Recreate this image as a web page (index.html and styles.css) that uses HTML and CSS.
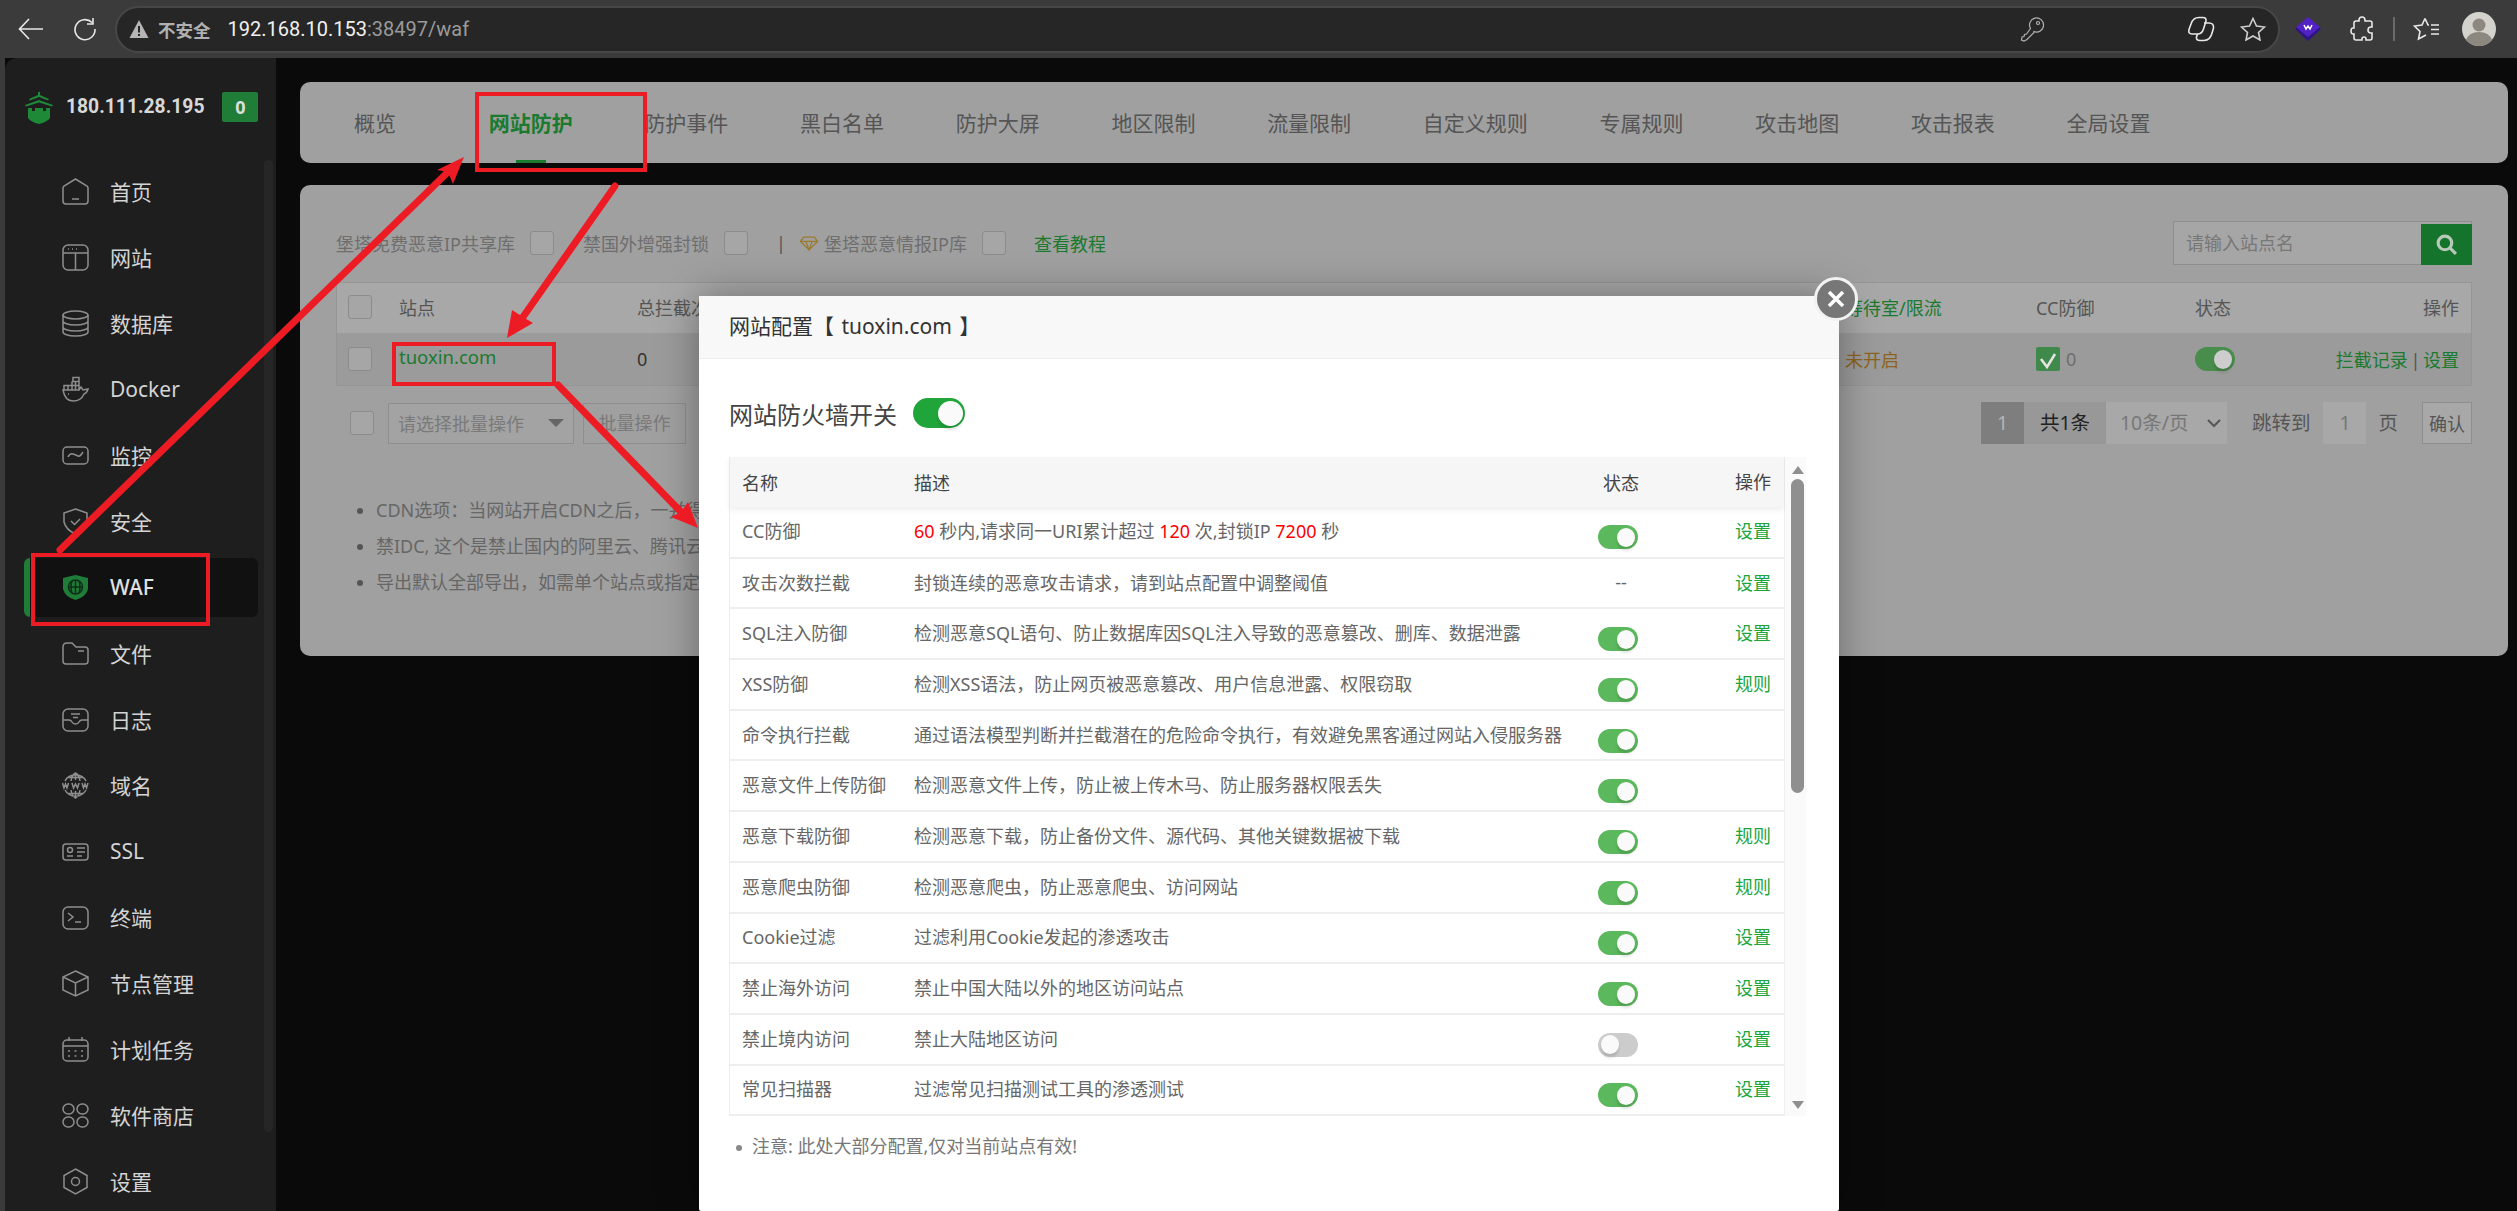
FILE: index.html
```html
<!DOCTYPE html>
<html lang="zh-CN">
<head>
    <meta charset="UTF-8">
    <title>WAF</title>
    <link rel="stylesheet" href="styles.css">
</head>
<body>
    <header class="browser">
        <svg class="b-icon back" viewBox="0 0 26 24"><path d="M25 12H2M11 2 1.500 12 11 22" /></svg>
        <svg class="b-icon reload" viewBox="0 0 24 24"><path d="M19 5.500A10 10 0 1 0 22 12M20 1v6h-6" /></svg>
        <div class="address">
            <svg class="warn" viewBox="0 0 20 20"><path d="M10 1 19.500 19H.5z" /><path class="warn-mark" d="M10 7v6.500M10 15v2" /></svg>
            <span class="insecure">不安全</span>
            <span class="url">192.168.10.153<em>:38497/waf</em></span>
            <svg class="b-icon key" viewBox="0 0 26 26"><path d="M15 16.500 8 23.500l-3 1.500-2.500-1 .5-3 2-.5.500-2 2-.5 4-5.500a7 7 0 1 1 3.500 3z" /><circle cx="19" cy="7" r="1.500" /></svg>
            <svg class="b-icon copilot" viewBox="0 0 28 26"><path d="M12 1.500h4q3.500 0 3 3.500l-2.500 8q-1.500 5-6 5H5q-4 0-3-4.500L4 8q2-6.500 8-6.500z" /><path d="M17 7h5q5 0 4.500 5l-1 3.500q-2 9-8.500 9h-4q-4 0-3.500-3.500l1-3" /></svg>
            <svg class="b-icon star" viewBox="0 0 26 24"><path d="m13 1.500 3.500 7.500 8 1-6 5.500 1.500 7.500-7-4-7 4 1.500-7.500-6-5.500 8-1z" /></svg>
        </div>
        <svg class="ext-diamond" viewBox="0 0 26 24"><path class="ext-base" d="M13 3 26 12 13 24 0 12z" /><path class="ext-top" d="M13 0 25 10 13 20 1 10z" /><path class="ext-mark" d="m9 8 2 4 2-3 2 3 2-4" /></svg>
        <svg class="b-icon puzzle" viewBox="0 0 24 26"><path d="M9 4q0-3 3-3t3 3v1h5q2 0 2 2v4h-1q-3 0-3 3t3 3h1v5q0 2-2 2h-4v-1q0-2-2-2t-2 2v1H6q-2 0-2-2v-4H3q-2 0-2-3t2-3h1V7q0-2 2-2h3z" /></svg>
        <span class="b-divider"></span>
        <svg class="b-icon favs" viewBox="0 0 27 24"><path d="M12 1.500 15 8h1M12 1.500 9 8l-7.500 1L7 14.500 5.500 22 13 18M18 8h8M18 12.500h8M18 17h8" /></svg>
        <svg class="avatar" viewBox="0 0 34 34"><circle cx="17" cy="17" r="17" fill="#d4d2cd" /><circle cx="17" cy="13" r="6.500" fill="#8c8880" /><path d="M4 28q3-8 13-8t13 8q-5 6-13 6T4 28z" fill="#8c8880" /></svg>
    </header>

    <div class="app">
        <aside class="sidebar">
            <div class="brand">
                <svg class="brand-logo" viewBox="0 0 30 32"><path d="M14 0h2v3l9 4-1 1.500-9-3.500-9 3.500L5 7l9-4z" /><path d="m15 8 14 5-1 1.500L15 10.500 2 14.500 1 13z" /><path d="M4 16h4v3h3v-3h8v3h3v-3h4v10q-3 4-11 6-8-2-11-6z" /></svg>
                <span class="brand-ip">180.111.28.195</span>
                <span class="brand-count">0</span>
            </div>
            <nav class="menu">
                <a class="menu-item"><svg viewBox="0 0 27 27"><path d="M13.500 1 25 8q1 1 1 2v13q0 3-3 3H4q-3 0-3-3V10q0-1 1-2zM10 21h7" /></svg>首页</a>
                <a class="menu-item"><svg viewBox="0 0 27 27"><rect x="1" y="1" width="25" height="25" rx="5" /><path d="M1 9h25M13.500 9v17M6 5h1M10 5h1M14 5h1" /></svg>网站</a>
                <a class="menu-item"><svg viewBox="0 0 27 27"><ellipse cx="13.500" cy="5" rx="12.500" ry="4" /><path d="M1 5v17c0 2 5 4 12.500 4S26 24 26 22V5M1 11c0 2 5 4 12.500 4S26 13 26 11M1 17c0 2 5 4 12.500 4S26 19 26 17" /></svg>数据库</a>
                <a class="menu-item"><svg viewBox="0 0 27 27"><path d="M1 14h16l2-3 2 3 5-1q-1 4-4 5-3 7-11 7Q3 25 1 14zM2 9.500h15V14H2zM6 9.500V14M10 5.500V14M13.500 5.500V14M10 5.500h7v4M11 1.500h6v4h-6zM6 18h1" /></svg>Docker</a>
                <a class="menu-item"><svg viewBox="0 0 27 27"><rect x="1" y="5" width="25" height="17" rx="4" /><path d="M6 15q2-4 5-3t5 2 5-4" /></svg>监控</a>
                <a class="menu-item"><svg viewBox="0 0 27 27"><path d="M13.500 1 25 5v9q-2 8-11.500 12Q4 22 2 14V5zM9 13l3.500 3.500L18 11" /></svg>安全</a>
                <a class="menu-item active"><svg class="waf-icon" viewBox="0 0 27 27"><path class="waf-shield" d="M13.500 1 26 4v11q-2 8-12.500 11Q3 23 1 15V4z" /><circle cx="13.500" cy="13" r="7" /><path d="M6.500 13h14M13.500 6v14M10 7q-2 6 0 12M17 7q2 6 0 12" /></svg>WAF</a>
                <a class="menu-item"><svg viewBox="0 0 27 27"><path d="M1 7q0-4 4-4h5l4 4h9q3 0 3 3v11q0 3-3 3H4q-3 0-3-3zM16 11h6" /></svg>文件</a>
                <a class="menu-item"><svg viewBox="0 0 27 27"><rect x="1" y="3" width="25" height="22" rx="5" /><path d="M1 14h6q2 0 3 2t3.500 2 3.500-2 3-2h6M9 8h9M11 11.500h5" /></svg>日志</a>
                <a class="menu-item"><svg viewBox="0 0 27 27"><path d="M3 9A12 12 0 0 1 24 9M3 18A12 12 0 0 0 24 18M6 5.500h15M6 21.500h15M13.500 1v7M13.500 19v7M9 9q1-6 4.500-8 3.500 2 4.500 8M9 18q1 6 4.500 8 3.500-2 4.500-8M.5 11l1.500 5 1.500-4 1.500 4 1.500-5M10 11l1.500 5 2-4 2 4 1.500-5M20 11l1.500 5 1.500-4 1.500 4 1.500-5" /></svg>域名</a>
                <a class="menu-item"><svg viewBox="0 0 27 27"><rect x="1" y="6" width="25" height="16" rx="3" /><circle cx="8" cy="12" r="2.500" /><path d="M5 18h6M15 10h8M15 14h8M15 18h5" /></svg>SSL</a>
                <a class="menu-item"><svg viewBox="0 0 27 27"><rect x="1" y="3" width="25" height="22" rx="5" /><path d="m6 9 5 4-5 4M13 18h6" /></svg>终端</a>
                <a class="menu-item"><svg viewBox="0 0 27 27"><path d="M13.500 1 26 7v13l-12.500 6L1 20V7zM1 7l12.500 6L26 7M13.500 13v13" /></svg>节点管理</a>
                <a class="menu-item"><svg viewBox="0 0 27 27"><rect x="1" y="4" width="25" height="21" rx="4" /><path d="M1 10h25M7 1v4M20 1v4M6 15h2M12.500 15h2M19 15h2M6 20h2M12.500 20h2M19 20h2" /></svg>计划任务</a>
                <a class="menu-item"><svg viewBox="0 0 27 27"><rect x="1" y="2" width="11" height="10" rx="5" /><rect x="15" y="2" width="11" height="10" rx="5" /><rect x="1" y="15" width="11" height="10" rx="5" /><rect x="15" y="15" width="11" height="10" rx="5" /></svg>软件商店</a>
                <a class="menu-item"><svg viewBox="0 0 27 27"><path d="M13.500 1 25 7.500v12L13.500 26 2 19.500v-12z" /><circle cx="13.500" cy="13.500" r="4" /></svg>设置</a>
            </nav>
            <span class="side-scroll"></span>
        </aside>

        <main class="content">
            <div class="tabs">
                <a class="tab first">概览</a>
                <a class="tab current">网站防护</a>
                <a class="tab">防护事件</a>
                <a class="tab">黑白名单</a>
                <a class="tab">防护大屏</a>
                <a class="tab">地区限制</a>
                <a class="tab">流量限制</a>
                <a class="tab">自定义规则</a>
                <a class="tab">专属规则</a>
                <a class="tab">攻击地图</a>
                <a class="tab">攻击报表</a>
                <a class="tab">全局设置</a>
            </div>

            <section class="panel">
                <div class="filters">
                    <span>堡塔免费恶意IP共享库</span><i class="check"></i>
                    <span class="f-second">禁国外增强封锁</span><i class="check"></i>
                    <span class="f-bar">|</span>
                    <svg class="gem" viewBox="0 0 18 14"><path d="M4 1h10l3 4-8 8-8-8zM1 5h16M6 5l3 8 3-8" /></svg>
                    <span>堡塔恶意情报IP库</span><i class="check"></i>
                    <a class="green f-link">查看教程</a>
                    <div class="search">
                        <span class="search-text">请输入站点名</span>
                        <span class="search-btn"><svg viewBox="0 0 22 22"><circle cx="9.500" cy="9.500" r="6.500" /><path d="m14.500 14.500 5.500 5.500" /></svg></span>
                    </div>
                </div>

                <div class="site-table">
                    <div class="site-row site-head">
                        <span><i class="check"></i></span>
                        <span>站点</span>
                        <span>总拦截次数</span>
                        <span class="green">等待室/限流</span>
                        <span>CC防御</span>
                        <span>状态</span>
                        <span class="right">操作</span>
                    </div>
                    <div class="site-row site-body">
                        <span><i class="check"></i></span>
                        <span class="green site-name">tuoxin.com</span>
                        <span class="dark">0</span>
                        <span class="amber">未开启</span>
                        <span class="cc"><svg class="cc-check" viewBox="0 0 24 24"><rect width="24" height="24" rx="2" /><path d="m5 12 6 8 8-13" /></svg>0</span>
                        <span><i class="toggle dim"><b></b></i></span>
                        <span class="right"><a class="green">拦截记录</a> | <a class="green">设置</a></span>
                    </div>
                </div>

                <div class="batch">
                    <i class="check"></i>
                    <span class="batch-select">请选择批量操作<i class="caret"></i></span>
                    <span class="batch-btn">批量操作</span>
                    <div class="pager">
                        <span class="page-now">1</span>
                        <span class="page-total">共1条</span>
                        <span class="page-size">10条/页<svg viewBox="0 0 14 10"><path d="m1 2 6 6 6-6" /></svg></span>
                        <span class="page-jump">跳转到</span>
                        <span class="page-input">1</span>
                        <span class="page-unit">页</span>
                        <span class="page-ok">确认</span>
                    </div>
                </div>

                <ul class="tips">
                    <li>CDN选项：当网站开启CDN之后，一并得</li>
                    <li>禁IDC, 这个是禁止国内的阿里云、腾讯云</li>
                    <li>导出默认全部导出，如需单个站点或指定</li>
                </ul>
            </section>
        </main>
    </div>

    <div class="modal">
        <div class="modal-title">网站配置【 tuoxin.com 】</div>
        <button class="modal-close"><svg viewBox="0 0 20 20"><path d="m3 3 14 14M17 3 3 17" /></svg></button>
        <div class="modal-body">
            <div class="fw-switch">
                <span>网站防火墙开关</span>
                <i class="toggle big"><b></b></i>
            </div>
            <div class="rules-wrap">
                <div class="rules-box">
                    <table class="rules">
                        <colgroup><col class="c-name"><col class="c-desc"><col class="c-state"><col class="c-op"></colgroup>
                        <thead>
                            <tr><th>名称</th><th>描述</th><th class="center">状态</th><th class="op">操作</th></tr>
                        </thead>
                        <tbody>
                            <tr><td>CC防御</td><td><em>60</em> 秒内,请求同一URI累计超过 <em>120</em> 次,封锁IP <em>7200</em> 秒</td><td class="state"><i class="toggle"><b></b></i></td><td class="op"><a>设置</a></td></tr>
                            <tr><td>攻击次数拦截</td><td>封锁连续的恶意攻击请求，请到站点配置中调整阈值</td><td class="center">--</td><td class="op"><a>设置</a></td></tr>
                            <tr><td>SQL注入防御</td><td>检测恶意SQL语句、防止数据库因SQL注入导致的恶意篡改、删库、数据泄露</td><td class="state"><i class="toggle"><b></b></i></td><td class="op"><a>设置</a></td></tr>
                            <tr><td>XSS防御</td><td>检测XSS语法，防止网页被恶意篡改、用户信息泄露、权限窃取</td><td class="state"><i class="toggle"><b></b></i></td><td class="op"><a>规则</a></td></tr>
                            <tr><td>命令执行拦截</td><td>通过语法模型判断并拦截潜在的危险命令执行，有效避免黑客通过网站入侵服务器</td><td class="state"><i class="toggle"><b></b></i></td><td class="op"></td></tr>
                            <tr><td>恶意文件上传防御</td><td>检测恶意文件上传，防止被上传木马、防止服务器权限丢失</td><td class="state"><i class="toggle"><b></b></i></td><td class="op"></td></tr>
                            <tr><td>恶意下载防御</td><td>检测恶意下载，防止备份文件、源代码、其他关键数据被下载</td><td class="state"><i class="toggle"><b></b></i></td><td class="op"><a>规则</a></td></tr>
                            <tr><td>恶意爬虫防御</td><td>检测恶意爬虫，防止恶意爬虫、访问网站</td><td class="state"><i class="toggle"><b></b></i></td><td class="op"><a>规则</a></td></tr>
                            <tr><td>Cookie过滤</td><td>过滤利用Cookie发起的渗透攻击</td><td class="state"><i class="toggle"><b></b></i></td><td class="op"><a>设置</a></td></tr>
                            <tr><td>禁止海外访问</td><td>禁止中国大陆以外的地区访问站点</td><td class="state"><i class="toggle"><b></b></i></td><td class="op"><a>设置</a></td></tr>
                            <tr><td>禁止境内访问</td><td>禁止大陆地区访问</td><td class="state"><i class="toggle off"><b></b></i></td><td class="op"><a>设置</a></td></tr>
                            <tr><td>常见扫描器</td><td>过滤常见扫描测试工具的渗透测试</td><td class="state"><i class="toggle"><b></b></i></td><td class="op"><a>设置</a></td></tr>
                        </tbody>
                    </table>
                </div>
                <div class="rules-scroll">
                    <i class="arrow-up"></i>
                    <span class="thumb"></span>
                    <i class="arrow-down"></i>
                </div>
            </div>
            <p class="note">注意: 此处大部分配置,仅对当前站点有效!</p>
        </div>
    </div>

    <svg class="marks" viewBox="0 0 2517 1211">
        <rect x="33" y="555" width="175" height="69" />
        <rect x="477" y="94" width="168" height="76" />
        <rect x="394" y="344" width="160" height="40" />
        <path d="M60 550 Q62 548 64 546 L448 172" />
        <path d="M615 186 523 317" />
        <path d="M558 385 681 512" />
        <polygon points="464,157 437,170 448,172 453,184" />
        <polygon points="507,338 512,310 523,317 533,323" />
        <polygon points="698,528 671,517 681,512 688,502" />
    </svg>
</body>
</html>
```

FILE: styles.css
```css
* {
    box-sizing: border-box;
}

html, body {
    margin: 0;
    height: 1211px;
    overflow: hidden;
}

body {
    font-family: "Noto Sans", "Noto Sans CJK SC", sans-serif;
    background: #0a0a0a;
    color: #666;
    position: relative;
}

i, em {
    font-style: normal;
}

/* browser bar */
.browser {
    height: 58px;
    background: #3b3b3b;
    display: flex;
    align-items: center;
    padding-left: 18px;
}

.b-icon {
    fill: none;
    stroke: #e8e8e8;
    stroke-width: 1.600;
    flex: none;
}

.back {
    width: 26px;
    height: 24px;
}

.reload {
    width: 24px;
    height: 24px;
    margin-left: 29px;
}

.address {
    width: 2165px;
    height: 47px;
    margin-left: 18px;
    background: #262626;
    border: 2px solid #474747;
    border-radius: 24px;
    display: flex;
    align-items: center;
    padding-left: 12px;
    font-family: Roboto, "Noto Sans CJK SC", sans-serif;
    font-size: 20px;
}

.warn {
    width: 20px;
    height: 20px;
    fill: #b5b5b5;
}

.warn-mark {
    stroke: #262626;
    stroke-width: 2;
}

.insecure {
    margin-left: 9px;
    color: #b0b0b0;
    font-weight: 700;
    font-size: 17.500px;
}

.url {
    margin-left: 17px;
    color: #f0f0f0;
    width: 1791px;
}

.url em {
    color: #9a9a9a;
}

.key {
    width: 26px;
    height: 26px;
    stroke: #b0b0b0;
    stroke-width: 1.200;
}

.copilot {
    width: 28px;
    height: 26px;
    margin-left: 142px;
}

.star {
    width: 26px;
    height: 24px;
    margin-left: 25px;
    stroke: #cfcfcf;
}

.ext-diamond {
    width: 26px;
    height: 24px;
    margin-left: 15px;
    flex: none;
}

.ext-base {
    fill: #2e1587;
}

.ext-top {
    fill: #5222c4;
}

.ext-mark {
    fill: none;
    stroke: #fff;
    stroke-width: 1.500;
}

.puzzle {
    width: 24px;
    height: 26px;
    margin-left: 29px;
}

.b-divider {
    width: 2px;
    height: 24px;
    background: #6a6a6a;
    margin-left: 19px;
}

.favs {
    width: 27px;
    height: 24px;
    margin-left: 18px;
}

.avatar {
    width: 34px;
    height: 34px;
    margin-left: 22px;
    flex: none;
}

/* layout */
.app {
    display: flex;
    height: 1153px;
    background: #0a0a0a;
    border-left: 5px solid #3b3b3b;
}

.sidebar {
    width: 271px;
    flex: none;
    background: #1e1e1e;
    border-top-left-radius: 12px;
    position: relative;
    color: #d4d4d4;
}

.brand {
    height: 103.500px;
    display: flex;
    align-items: flex-start;
    padding: 34px 0 0 19px;
}

.brand-logo {
    width: 30px;
    height: 32px;
    fill: #1e8a38;
    stroke: none;
}

.brand-ip {
    margin-left: 12px;
    font-size: 19.300px;
    font-weight: 700;
    color: #d8d8d8;
    line-height: 30px;
    font-family: Roboto, sans-serif;
}

.brand-count {
    margin-left: 18px;
    width: 36px;
    height: 30px;
    background: #1f7d38;
    border-radius: 2px;
    color: #ddd;
    font-weight: 700;
    font-size: 18px;
    text-align: center;
    line-height: 30px;
}

.menu-item {
    display: flex;
    align-items: center;
    gap: 21px;
    height: 59px;
    margin: 0 0 7px 19px;
    width: 234px;
    padding-left: 38px;
    font-size: 21px;
    border-radius: 6px;
}

.menu-item svg {
    width: 27px;
    height: 27px;
    fill: none;
    stroke: #8e8e8e;
    stroke-width: 1.500;
    flex: none;
}

.menu-item.active {
    background: #111;
    color: #e2e2e2;
    border-left: 6px solid #1f7d38;
    padding-left: 32px;
    font-weight: 500;
}

.menu-item svg.waf-icon {
    stroke: #0f2e18;
}

.waf-shield {
    fill: #1f7d38;
    stroke: none;
}

.side-scroll {
    position: absolute;
    left: 259px;
    top: 102px;
    width: 9px;
    height: 972px;
    background: #262626;
    border-radius: 5px;
}

.content {
    flex: 1;
    padding: 24px 9px 0 24px;
}

/* tabs */
.tabs {
    height: 81px;
    background: #a0a0a0;
    border-radius: 10px;
    display: flex;
    align-items: flex-start;
    padding: 29px 0 0 54px;
    gap: 71.700px;
    font-size: 21px;
    color: #555;
    line-height: 24px;
}

.tab {
    position: relative;
    white-space: nowrap;
}

.tab.first {
    margin-right: 21px;
}

.tab.current {
    color: #1a7a2f;
    font-weight: 700;
}

.tab.current::after {
    content: "";
    position: absolute;
    left: 27px;
    width: 30px;
    height: 3px;
    top: 49px;
    background: #1a7a2f;
}

/* panel */
.panel {
    height: 471px;
    margin-top: 22px;
    background: #a0a0a0;
    border-radius: 10px;
    padding: 36px 36px 0;
    font-size: 18px;
    color: #666;
}

.filters {
    height: 44px;
    display: flex;
    align-items: center;
    font-size: 18px;
    color: #6e6e6e;
}

.check {
    display: block;
    width: 24px;
    height: 24px;
    border: 1px solid #8c8c8c;
    border-radius: 3px;
    background: #a6a6a6;
    flex: none;
}

.filters .check {
    margin-left: 15px;
}

.f-second {
    margin-left: 29px;
}

.f-bar {
    margin: 0 13px 0 28px;
    color: #555;
}

.gem {
    width: 20px;
    height: 15px;
    fill: none;
    stroke: #9a7a2c;
    stroke-width: 1.200;
    margin-right: 5px;
}

.f-link {
    margin-left: 28px;
}

.green {
    color: #1a7a2f;
}

.search {
    margin-left: auto;
    width: 299px;
    height: 44px;
    display: flex;
    border: 1px solid #8e8e8e;
    background: #a6a6a6;
}

.search-text {
    flex: 1;
    padding-left: 12px;
    line-height: 42px;
    color: #777;
}

.search-btn {
    width: 51px;
    background: #15742b;
    margin: 2px -1px -1px 0;
    display: flex;
    align-items: center;
    justify-content: center;
}

.search-btn svg {
    width: 23px;
    height: 23px;
    fill: none;
    stroke: #b8c8bb;
    stroke-width: 3;
}

.site-table {
    margin-top: 17px;
    border: 1px solid #969696;
}

.site-row {
    display: grid;
    grid-template-columns: 62px 238px 1208px 191px 159px 100px 1fr;
    align-items: center;
    padding-right: 12px;
}

.site-row > span:first-child {
    padding-left: 11px;
}

.site-head {
    height: 50px;
    background: #a8a8a8;
    color: #555;
    padding-bottom: 3px;
}

.site-body {
    height: 52px;
    background: #9b9b9b;
}

.site-name {
    font-size: 18.500px;
    padding-bottom: 6px;
}

.dark {
    color: #333;
}

.amber {
    color: #8c6420;
}

.right {
    text-align: right;
    color: #555;
    word-spacing: -2px;
}

.cc {
    display: flex;
    align-items: center;
    gap: 6px;
    color: #6e6e6e;
}

.cc-check {
    width: 24px;
    height: 24px;
    fill: #3f8a4a;
}

.cc-check path {
    fill: none;
    stroke: #e4e4e4;
    stroke-width: 2.500;
}

/* batch and pager */
.batch {
    margin-top: 16px;
    height: 42px;
    display: flex;
    align-items: center;
    padding-left: 14px;
    color: #7a7a7a;
}

.batch-select {
    width: 186px;
    height: 41px;
    margin-left: 14px;
    border: 1px solid #8e8e8e;
    background: #a3a3a3;
    padding: 0 9px;
    display: flex;
    align-items: center;
    justify-content: space-between;
}

.caret {
    border: 8px solid transparent;
    border-top-color: #666;
    border-bottom: 0;
}

.batch-btn {
    width: 103px;
    height: 41px;
    margin-left: 9px;
    border: 1px solid #8e8e8e;
    text-align: center;
    line-height: 39px;
}

.pager {
    margin-left: auto;
    display: flex;
    align-items: center;
    height: 42px;
    color: #555;
    font-size: 19.500px;
}

.pager > span {
    height: 42px;
    line-height: 42px;
}

.page-now {
    width: 43px;
    background: #7e7e7e;
    color: #b4b4b4;
    text-align: center;
}

.page-total {
    width: 82px;
    background: #989898;
    color: #222;
    text-align: center;
}

.page-size {
    width: 121px;
    background: #a8a8a8;
    color: #777;
    padding: 0 6px 0 14px;
    display: flex;
    align-items: center;
    justify-content: space-between;
}

.page-size svg {
    width: 14px;
    height: 10px;
    fill: none;
    stroke: #555;
    stroke-width: 2;
}

.page-jump {
    margin-left: 25px;
}

.page-input {
    width: 43px;
    margin-left: 13px;
    background: #a8a8a8;
    color: #777;
    text-align: center;
}

.page-unit {
    margin-left: 12px;
}

.page-ok {
    width: 50px;
    margin-left: 24px;
    border: 1px solid #8e8e8e;
    background: #a8a8a8;
    text-align: center;
    line-height: 40px;
    font-size: 18px;
}

.tips {
    margin: 48px 0 0;
    padding-left: 40px;
    line-height: 36px;
    color: #666;
    white-space: nowrap;
}

.tips li::marker {
    color: #555;
}

/* toggles */
.toggle {
    display: flex;
    justify-content: flex-end;
    align-items: center;
    width: 40px;
    height: 24px;
    background: #5cb85c;
    border-radius: 12px;
    padding: 0 3px;
    margin: 11px 0 0 17px;
}

.toggle b {
    width: 18px;
    height: 19px;
    border-radius: 50%;
    background: #fafafa;
    box-shadow: 0 4px 3px rgba(0, 0, 0, 0.12);
}

.toggle.off {
    background: #ccc;
    justify-content: flex-start;
}

.toggle.dim {
    background: #488d4c;
    margin: 0;
}

.toggle.dim b {
    background: #cdcdcd;
}

.toggle.big {
    width: 52px;
    height: 30px;
    border-radius: 15px;
    background: #20a53a;
    margin: 0 0 0 16px;
    padding: 0 2px;
}

.toggle.big b {
    width: 25px;
    height: 25px;
}

/* modal */
.modal {
    position: absolute;
    left: 699px;
    top: 296px;
    width: 1140px;
    height: 915px;
    background: #fff;
    border-radius: 2px;
    box-shadow: 0 0 40px rgba(0, 0, 0, 0.35);
}

.modal-title {
    height: 63px;
    background: #f8f8f8;
    border-bottom: 1px solid #eee;
    padding-left: 30px;
    line-height: 60px;
    font-size: 21px;
    color: #333;
    word-spacing: 2px;
}

.modal-close {
    position: absolute;
    right: -19px;
    top: -19px;
    width: 44px;
    height: 44px;
    border-radius: 50%;
    border: 3px solid #f2f2f2;
    background: #777;
    padding: 9px;
    display: flex;
}

.modal-close svg {
    fill: none;
    stroke: #fff;
    stroke-width: 3.500;
    width: 100%;
    height: 100%;
}

.modal-body {
    padding: 39px 0 0 30px;
}

.fw-switch {
    display: flex;
    align-items: center;
    height: 30px;
    font-size: 24px;
    color: #444;
}

.rules-wrap {
    margin-top: 29px;
    display: flex;
    height: 659px;
}

.rules-box {
    width: 1056px;
    border-left: 1px solid #eee;
    border-right: 1px solid #eee;
}

.rules {
    width: 100%;
    table-layout: fixed;
    border-collapse: collapse;
    font-size: 18px;
}

.c-name {
    width: 184px;
}

.c-desc {
    width: 667px;
}

.c-state {
    width: 80px;
}

.rules thead tr {
    height: 50px;
    background: #f6f6f6;
    box-shadow: 0 3px 6px rgba(0, 0, 0, 0.07);
    position: relative;
}

.rules th {
    font-weight: 400;
    color: #444;
    text-align: left;
    padding: 0 0 0 12px;
}

.rules th:nth-child(2), .rules td:nth-child(2) {
    padding-left: 0;
}

.rules tbody tr {
    height: 50.700px;
    border-bottom: 2px solid #eee;
}

.rules td {
    padding: 0 0 3px 12px;
    color: #666;
    white-space: nowrap;
}

.rules th.center, .rules td.center {
    text-align: center;
    padding-left: 0;
}

.rules td.state {
    padding: 0;
}

.rules td:nth-child(3) {
    padding-left: 0;
}

.rules .op {
    text-align: right;
    padding: 0 13px 3px 0;
}

.rules a {
    color: #20a53a;
}

.rules em {
    color: #f00;
}

.rules-scroll {
    width: 21px;
    background: #fafafa;
    position: relative;
    display: flex;
    flex-direction: column;
    align-items: center;
    padding: 9px 0 7px 4px;
}

.arrow-up {
    border: 6px solid transparent;
    border-bottom: 8px solid #8f8f8f;
    border-top: 0;
}

.arrow-down {
    margin-top: auto;
    border: 6px solid transparent;
    border-top: 8px solid #8f8f8f;
    border-bottom: 0;
}

.thumb {
    width: 13px;
    height: 314px;
    margin-top: 5px;
    background: #8f8f8f;
    border-radius: 7px;
}

.note {
    margin: 16px 0 0 7px;
    font-size: 18px;
    color: #777;
}

.note::before {
    content: "";
    display: inline-block;
    width: 6px;
    height: 6px;
    border-radius: 50%;
    background: #888;
    margin-right: 10px;
    vertical-align: middle;
}

/* red annotations drawn on the screenshot */
.marks {
    position: absolute;
    left: 0;
    top: 0;
    width: 2517px;
    height: 1211px;
    pointer-events: none;
}

.marks rect {
    fill: none;
    stroke: #ed1c24;
    stroke-width: 4;
}

.marks path {
    fill: none;
    stroke: #ed1c24;
    stroke-width: 7;
    stroke-linecap: round;
}

.marks polygon {
    fill: #ed1c24;
}
```
